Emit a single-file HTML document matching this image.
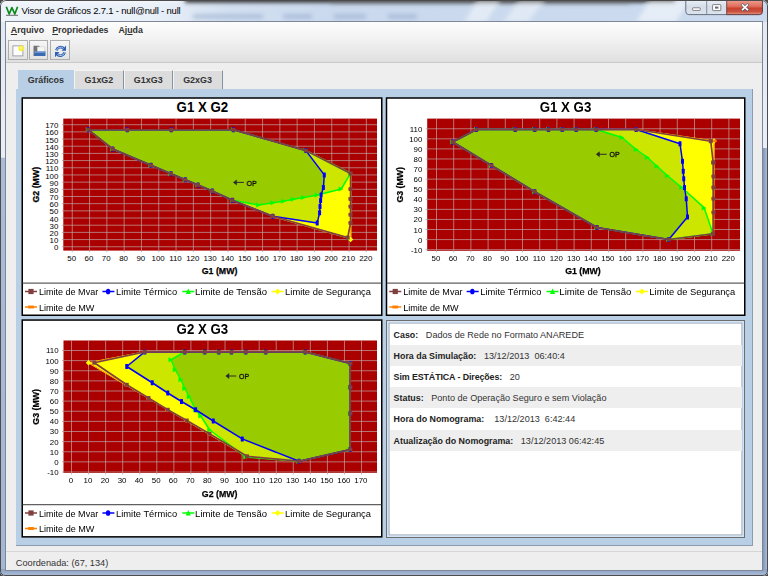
<!DOCTYPE html>
<html lang="pt-BR">
<head>
<meta charset="utf-8">
<title>Visor de Gráficos 2.7.1 - null@null - null</title>
<style>
html,body{margin:0;padding:0;}
body{width:768px;height:576px;overflow:hidden;position:relative;background:#4a4a4a;font-family:"Liberation Sans",sans-serif;font-size:9px;color:#333;}
#win{position:absolute;left:0;top:0;width:768px;height:576px;box-sizing:border-box;border-radius:6px 6px 5px 5px;background:linear-gradient(to bottom,#dfe8f4 0,#e9eff8 157px,#aabcd8 158.5px,#a3b6d3 100%);overflow:hidden;}
#win:before{content:"";position:absolute;left:0;top:0;right:0;bottom:0;border:1px solid #4c4c4c;border-radius:6px 6px 5px 5px;box-sizing:border-box;z-index:5;pointer-events:none;}
#titlebar{position:absolute;left:0;top:0;width:768px;height:22px;background:linear-gradient(to right,#eef3fa 0,#eaf0f8 150px,#d3e0f1 230px,#cad9ee 330px,#cbdaee 100%);}
#title{position:absolute;left:21.5px;top:5.2px;font-size:9.5px;color:#000;white-space:nowrap;letter-spacing:-0.2px;}
#client{position:absolute;left:5.6px;top:21.6px;width:756.6px;height:548.4px;background:#eeeeee;outline:1px solid #7d8796;overflow:hidden;}
#bars{position:absolute;left:0;top:0;width:100%;height:41px;background:linear-gradient(#fdfdfd,#f4f4f4 35%,#dfdfdf);}
#menubar{position:absolute;left:0;top:0;width:100%;height:18px;}
.menu{position:absolute;top:3.9px;font-weight:bold;font-size:8.8px;color:#333;white-space:nowrap;}
.menu u{text-decoration:underline;}
#toolbar{position:absolute;left:0;top:18px;width:100%;height:23px;border-bottom:1px solid #c9c9c9;box-sizing:border-box;}
.tbtn{position:absolute;top:0.8px;width:19.4px;height:20px;border:0.8px solid #adadad;background:linear-gradient(#f6f6f6,#e3e3e3);box-sizing:border-box;}
#tabs{position:absolute;left:0;top:0;}
.tab{position:absolute;top:48.6px;height:19.2px;box-sizing:border-box;background:#dcdcdc;border-top:1px solid #f4f4f4;border-left:1px solid #f4f4f4;border-right:1px solid #8493a3;font-weight:bold;font-size:8.95px;text-align:center;line-height:18px;color:#333;}
.tab.sel{background:#b8cfe5;border-color:#b8cfe5;height:20px;}
#tabpane{position:absolute;left:10.4px;top:67.8px;width:736.8px;height:456.4px;background:#b8cfe5;box-sizing:border-box;border-right:0.8px solid #8b9db3;border-bottom:0.8px solid #8b9db3;}
#status{position:absolute;left:0;top:529px;width:100%;height:20px;border-top:1px solid #d6d6d6;}
#status span{position:absolute;left:10.2px;top:6.2px;font-size:9.2px;color:#333;white-space:nowrap;}
#info{position:absolute;left:386px;top:320px;width:359.2px;height:218px;box-sizing:border-box;background:#fff;border:1px solid #6e6e6e;box-shadow:inset 0 0 0 1.7px #d3e3f6, inset 0 0 0 2.5px #8e9cab;}
.row{position:absolute;left:2.6px;width:352px;height:21.1px;font-size:9.1px;line-height:22px;white-space:nowrap;color:#333;overflow:hidden;}
.row b{margin-right:7.6px;color:#222;font-size:8.87px;}
.row.g{background:#eeeeee;}
svg text{font-family:"Liberation Sans",sans-serif;}
.ttl{font-size:14.1px;font-weight:bold;fill:#000;}
.tk{font-size:7.9px;fill:#000;}
.al{font-size:9.6px;font-weight:bold;fill:#000;stroke:#000;stroke-width:0.25px;}
.lg{font-size:9.3px;fill:#000;}
.op{font-size:7px;fill:#111;stroke:#111;stroke-width:0.3px;}
#charts{position:absolute;left:0;top:0;filter:blur(0.3px);}
</style>
</head>
<body>
<div id="win">
 <div id="titlebar">
  <svg width="768" height="22" style="position:absolute;left:0;top:0">
   <defs><filter id="bl"><feGaussianBlur stdDeviation="2.2"/></filter>
   <linearGradient id="cl" x1="0" y1="0" x2="0" y2="1"><stop offset="0" stop-color="#f2a99e"/><stop offset="0.5" stop-color="#dc6a57"/><stop offset="0.58" stop-color="#c9412e"/><stop offset="0.8" stop-color="#c9503c"/><stop offset="1" stop-color="#e39587"/></linearGradient>
   <linearGradient id="bt" x1="0" y1="0" x2="0" y2="1"><stop offset="0" stop-color="#eef2f8"/><stop offset="0.5" stop-color="#d5dde9"/><stop offset="1" stop-color="#dbe3ee"/></linearGradient></defs>
   <g filter="url(#bl)"><rect x="185" y="-4" width="490" height="6.5" fill="#2c2c2c"/><rect x="330" y="-2" width="300" height="6" fill="#555" opacity="0.55"/>
   <rect x="193" y="14" width="70" height="5" fill="#8fa6c8" opacity="0.5"/><rect x="283" y="14" width="29" height="5" fill="#8fa6c8" opacity="0.5"/><rect x="334" y="14" width="32" height="5" fill="#8fa6c8" opacity="0.5"/><rect x="388" y="14" width="29" height="5" fill="#8fa6c8" opacity="0.5"/>
   <polygon points="478,0 500,0 486,22 464,22" fill="#fff" opacity="0.45"/><polygon points="520,0 545,0 528,22 503,22" fill="#fff" opacity="0.4"/><polygon points="650,0 690,0 676,22 636,22" fill="#fff" opacity="0.5"/>
   <rect x="0" y="-3" width="180" height="5" fill="#fff" opacity="0.6"/></g>
   <!-- app icon -->
   <path d="M6.3 6.8 L9.2 14 L11.9 7.6 L14.8 14 L17.6 6.8" fill="none" stroke="#0a8a1a" stroke-width="1.7" stroke-linejoin="round"/>
   <line x1="6" y1="15.3" x2="18" y2="15.3" stroke="#444" stroke-width="0.8"/>
   <!-- caption buttons -->
   <path d="M685.8 -1 H762.4 V11.5 Q762.4 14.6 759.4 14.6 H688.8 Q685.8 14.6 685.8 11.5 Z" fill="url(#bt)" stroke="#5c6470" stroke-width="0.9"/>
   <path d="M726.7 -1 H762.4 V11.5 Q762.4 14.6 759.4 14.6 H726.7 Z" fill="url(#cl)" stroke="#5c3030" stroke-width="0.8"/>
   <line x1="706.7" y1="0" x2="706.7" y2="14.6" stroke="#6d7683" stroke-width="0.8"/>
   <rect x="692.6" y="7.8" width="7.6" height="2.6" rx="0.6" fill="#fff" stroke="#555" stroke-width="0.7"/>
   <rect x="712.6" y="4.6" width="8.2" height="6" rx="0.6" fill="#fff" stroke="#555" stroke-width="0.7"/>
   <rect x="715" y="6.6" width="3.4" height="2" fill="#667" />
   <path d="M742.6 5 L747.4 9.6 M747.4 5 L742.6 9.6" stroke="#555a66" stroke-width="2.9" stroke-linecap="square"/>
   <path d="M742.6 5 L747.4 9.6 M747.4 5 L742.6 9.6" stroke="#fff" stroke-width="1.7" stroke-linecap="square"/>
  </svg>
  <div id="title">Visor de Gráficos 2.7.1 - null@null - null</div>
 </div>
 <div style="position:absolute;left:762px;top:148px;width:6px;height:428px;background:linear-gradient(to right,#738bb2,#a9bad6 80%)"></div>
 <div style="position:absolute;left:0;top:569px;width:768px;height:7px;background:linear-gradient(#8aa0c3,#adbdd8)"></div>
 <div id="client">
  <div id="bars"></div>
  <div id="menubar">
   <span class="menu" style="left:5.2px"><u>A</u>rquivo</span>
   <span class="menu" style="left:46.6px"><u>P</u>ropriedades</span>
   <span class="menu" style="left:112.8px">Aj<u>u</u>da</span>
  </div>
  <div id="toolbar">
   <div class="tbtn" style="left:2.2px;width:19.8px"></div>
   <div class="tbtn" style="left:23.4px;width:19.4px"></div>
   <div class="tbtn" style="left:44.4px;width:19.6px"></div>
   <svg width="80" height="23" style="position:absolute;left:0;top:0">
    <rect x="6.9" y="5.9" width="10" height="10" fill="#fdfdfd" stroke="#9a9a9a" stroke-width="0.9"/>
    <circle cx="15.3" cy="8.3" r="2.9" fill="#f5ee3c"/><circle cx="15.1" cy="8.1" r="1.1" fill="#fbf8a0"/>
    <path d="M27.5 5.8 H33 L34 7 H38.9 V15.9 H27.5 Z" fill="#747474"/>
    <rect x="31.3" y="6.9" width="7.6" height="5.2" fill="#f6f6f6" stroke="#c4c4c4" stroke-width="0.4"/>
    <path d="M28.3 11.5 H39.5 V16 H28.3 Z" fill="#3b6ab2"/><path d="M28.3 11.5 H39.5 V12.7 H28.3 Z" fill="#7da2d8"/>
    <g fill="none" stroke="#2c5fb2" stroke-width="2.7"><path d="M50.4 10.4 A4.3 4.3 0 0 1 57.6 8.3"/><path d="M58.6 12.4 A4.3 4.3 0 0 1 51.4 14.5"/></g>
    <g fill="none" stroke="#bcd3f0" stroke-width="0.9"><path d="M50.4 10.2 A4.3 4.3 0 0 1 57.4 8.3"/><path d="M58.6 12.6 A4.3 4.3 0 0 1 51.6 14.5"/></g>
    <path d="M55.6 10.8 L60 10.8 L60 5.6 Z M53.4 12 L49 12 L49 17.2 Z" fill="#2c5fb2"/>
   </svg>
  </div>
  <div id="tabpane"></div>
  <div class="tab sel" style="left:12.4px;width:55.8px">Gráficos</div>
  <div class="tab" style="left:68.2px;width:50.2px">G1xG2</div>
  <div class="tab" style="left:118.4px;width:48.6px">G1xG3</div>
  <div class="tab" style="left:167px;width:50px">G2xG3</div>
  <div id="status"><span>Coordenada: (67, 134)</span></div>
 </div>
 <svg id="charts" width="768" height="576" viewBox="0 0 768 576">
<g id="c1">
<rect x="21.50" y="97.25" width="361.00" height="218.75" fill="#000"/>
<rect x="23.00" y="98.75" width="358.00" height="215.75" fill="#fff"/>
<text x="176.60" y="111.65" class="ttl" textLength="51.6" lengthAdjust="spacingAndGlyphs">G1 X G2</text>
<rect x="63.30" y="118.60" width="313.70" height="132.00" fill="#aa0000"/>
<g stroke="#bfa6a6" stroke-width="0.7"><line x1="72.25" y1="118.60" x2="72.25" y2="250.60"/><line x1="89.55" y1="118.60" x2="89.55" y2="250.60"/><line x1="106.85" y1="118.60" x2="106.85" y2="250.60"/><line x1="124.15" y1="118.60" x2="124.15" y2="250.60"/><line x1="141.45" y1="118.60" x2="141.45" y2="250.60"/><line x1="158.75" y1="118.60" x2="158.75" y2="250.60"/><line x1="176.05" y1="118.60" x2="176.05" y2="250.60"/><line x1="193.35" y1="118.60" x2="193.35" y2="250.60"/><line x1="210.65" y1="118.60" x2="210.65" y2="250.60"/><line x1="227.95" y1="118.60" x2="227.95" y2="250.60"/><line x1="245.25" y1="118.60" x2="245.25" y2="250.60"/><line x1="262.55" y1="118.60" x2="262.55" y2="250.60"/><line x1="279.85" y1="118.60" x2="279.85" y2="250.60"/><line x1="297.15" y1="118.60" x2="297.15" y2="250.60"/><line x1="314.45" y1="118.60" x2="314.45" y2="250.60"/><line x1="331.75" y1="118.60" x2="331.75" y2="250.60"/><line x1="349.05" y1="118.60" x2="349.05" y2="250.60"/><line x1="366.35" y1="118.60" x2="366.35" y2="250.60"/><line x1="63.30" y1="246.75" x2="377.00" y2="246.75"/><line x1="63.30" y1="239.57" x2="377.00" y2="239.57"/><line x1="63.30" y1="232.39" x2="377.00" y2="232.39"/><line x1="63.30" y1="225.21" x2="377.00" y2="225.21"/><line x1="63.30" y1="218.03" x2="377.00" y2="218.03"/><line x1="63.30" y1="210.85" x2="377.00" y2="210.85"/><line x1="63.30" y1="203.67" x2="377.00" y2="203.67"/><line x1="63.30" y1="196.49" x2="377.00" y2="196.49"/><line x1="63.30" y1="189.31" x2="377.00" y2="189.31"/><line x1="63.30" y1="182.13" x2="377.00" y2="182.13"/><line x1="63.30" y1="174.95" x2="377.00" y2="174.95"/><line x1="63.30" y1="167.77" x2="377.00" y2="167.77"/><line x1="63.30" y1="160.59" x2="377.00" y2="160.59"/><line x1="63.30" y1="153.41" x2="377.00" y2="153.41"/><line x1="63.30" y1="146.23" x2="377.00" y2="146.23"/><line x1="63.30" y1="139.05" x2="377.00" y2="139.05"/><line x1="63.30" y1="131.87" x2="377.00" y2="131.87"/><line x1="63.30" y1="124.69" x2="377.00" y2="124.69"/></g>
<clipPath id="c1_h"><polygon points="88.30,129.75 233.40,129.75 305.90,150.60 350.80,173.40 350.80,239.80 347.70,237.80 272.75,216.40 232.40,200.25 212.30,191.00 198.00,185.00 185.30,179.70 171.00,173.70 151.00,165.30 112.70,149.00"/></clipPath>
<clipPath id="c1_a"><polygon points="88.30,129.75 233.40,129.75 305.90,150.60 324.30,174.90 323.40,187.50 321.10,195.00 320.60,200.60 320.00,206.60 319.60,212.80 317.20,223.10 272.75,216.20 232.40,200.25 212.30,191.00 198.00,185.00 185.30,179.70 171.00,173.70 151.00,165.30 112.70,149.00"/></clipPath>
<polygon points="88.30,129.75 233.40,129.75 305.90,150.60 350.80,173.40 350.80,239.80 347.70,237.80 272.75,216.40 232.40,200.25 212.30,191.00 198.00,185.00 185.30,179.70 171.00,173.70 151.00,165.30 112.70,149.00" fill="#ffff00"/>
<g clip-path="url(#c1_h)">
<polygon points="88.30,129.75 233.40,129.75 305.90,150.60 324.30,174.90 323.40,187.50 321.10,195.00 320.60,200.60 320.00,206.60 319.60,212.80 317.20,223.10 272.75,216.20 232.40,200.25 212.30,191.00 198.00,185.00 185.30,179.70 171.00,173.70 151.00,165.30 112.70,149.00" fill="#cce600"/>
<polygon points="88.30,129.75 233.40,129.75 305.90,150.60 350.60,173.40 341.20,189.00 317.20,195.00 303.70,197.40 293.40,199.30 283.60,201.20 273.10,202.70 258.70,204.90 232.40,200.25 212.30,191.00 198.00,185.00 185.30,179.70 171.00,173.70 151.00,165.30 112.70,149.00" fill="#cce600"/>
<polygon points="88.30,129.75 233.40,129.75 305.90,150.60 350.60,173.40 341.20,189.00 317.20,195.00 303.70,197.40 293.40,199.30 283.60,201.20 273.10,202.70 258.70,204.90 232.40,200.25 212.30,191.00 198.00,185.00 185.30,179.70 171.00,173.70 151.00,165.30 112.70,149.00" fill="#99cc00" clip-path="url(#c1_a)"/>
</g>
<polygon points="88.30,129.75 233.40,129.75 305.90,150.60 350.80,173.40 350.80,239.80 347.70,237.80 272.75,216.40 232.40,200.25 212.30,191.00 198.00,185.00 185.30,179.70 171.00,173.70 151.00,165.30 112.70,149.00" fill="none" stroke="#ffff00" stroke-width="1.2" stroke-linejoin="round"/>
<polygon points="88.30,129.75 233.40,129.75 305.90,150.60 350.80,173.40 350.80,239.80 347.70,237.80 272.75,216.40 232.40,200.25 212.30,191.00 198.00,185.00 185.30,179.70 171.00,173.70 151.00,165.30 112.70,149.00" fill="none" stroke="#ff8000" stroke-width="0.8" stroke-linejoin="round"/>
<polygon points="350.10,186.90 352.00,188.80 350.10,190.70 348.20,188.80" fill="#ffff00"/>
<rect x="348.10" y="187.80" width="4.00" height="2.00" fill="#ff8000"/>
<polygon points="350.10,196.80 352.00,198.70 350.10,200.60 348.20,198.70" fill="#ffff00"/>
<rect x="348.10" y="197.70" width="4.00" height="2.00" fill="#ff8000"/>
<polygon points="350.10,204.40 352.00,206.30 350.10,208.20 348.20,206.30" fill="#ffff00"/>
<rect x="348.10" y="205.30" width="4.00" height="2.00" fill="#ff8000"/>
<polygon points="350.10,212.55 352.00,214.45 350.10,216.35 348.20,214.45" fill="#ffff00"/>
<rect x="348.10" y="213.45" width="4.00" height="2.00" fill="#ff8000"/>
<polygon points="350.10,220.90 352.00,222.80 350.10,224.70 348.20,222.80" fill="#ffff00"/>
<rect x="348.10" y="221.80" width="4.00" height="2.00" fill="#ff8000"/>
<polygon points="350.60,236.81 353.29,239.50 350.60,242.19 347.91,239.50" fill="#ffff00"/>
<polygon points="88.30,129.75 233.40,129.75 305.90,150.60 350.60,173.40 341.20,189.00 317.20,195.00 303.70,197.40 293.40,199.30 283.60,201.20 273.10,202.70 258.70,204.90 232.40,200.25 212.30,191.00 198.00,185.00 185.30,179.70 171.00,173.70 151.00,165.30 112.70,149.00" fill="none" stroke="#00ff00" stroke-width="1.5" stroke-linejoin="round"/>
<polygon points="85.80,127.25 90.55,129.75 85.80,132.25" fill="#00ff00"/>
<polygon points="230.90,127.25 235.65,129.75 230.90,132.25" fill="#00ff00"/>
<polygon points="303.40,148.10 308.15,150.60 303.40,153.10" fill="#00ff00"/>
<polygon points="348.10,170.90 352.85,173.40 348.10,175.90" fill="#00ff00"/>
<polygon points="338.70,186.50 343.45,189.00 338.70,191.50" fill="#00ff00"/>
<polygon points="314.70,192.50 319.45,195.00 314.70,197.50" fill="#00ff00"/>
<polygon points="301.20,194.90 305.95,197.40 301.20,199.90" fill="#00ff00"/>
<polygon points="290.90,196.80 295.65,199.30 290.90,201.80" fill="#00ff00"/>
<polygon points="281.10,198.70 285.85,201.20 281.10,203.70" fill="#00ff00"/>
<polygon points="270.60,200.20 275.35,202.70 270.60,205.20" fill="#00ff00"/>
<polygon points="256.20,202.40 260.95,204.90 256.20,207.40" fill="#00ff00"/>
<polygon points="229.90,197.75 234.65,200.25 229.90,202.75" fill="#00ff00"/>
<polygon points="209.80,188.50 214.55,191.00 209.80,193.50" fill="#00ff00"/>
<polygon points="195.50,182.50 200.25,185.00 195.50,187.50" fill="#00ff00"/>
<polygon points="182.80,177.20 187.55,179.70 182.80,182.20" fill="#00ff00"/>
<polygon points="168.50,171.20 173.25,173.70 168.50,176.20" fill="#00ff00"/>
<polygon points="148.50,162.80 153.25,165.30 148.50,167.80" fill="#00ff00"/>
<polygon points="110.20,146.50 114.95,149.00 110.20,151.50" fill="#00ff00"/>
<polygon points="88.30,129.75 127.30,129.75 171.30,129.75 233.40,129.75 305.90,150.60 324.30,174.90 323.40,187.50 321.10,195.00 320.60,200.60 320.00,206.60 319.60,212.80 317.20,223.10 272.75,216.20 232.40,200.25 212.30,191.00 198.00,185.00 185.30,179.70 171.00,173.70 151.00,165.30 112.70,149.00" fill="none" stroke="#0000ff" stroke-width="1.5" stroke-linejoin="round"/>
<rect x="86.80" y="127.25" width="3.00" height="5.00" rx="0.5" fill="#0000ff"/>
<rect x="125.80" y="127.25" width="3.00" height="5.00" rx="0.5" fill="#0000ff"/>
<rect x="169.80" y="127.25" width="3.00" height="5.00" rx="0.5" fill="#0000ff"/>
<rect x="231.90" y="127.25" width="3.00" height="5.00" rx="0.5" fill="#0000ff"/>
<rect x="304.40" y="148.10" width="3.00" height="5.00" rx="0.5" fill="#0000ff"/>
<rect x="322.80" y="172.40" width="3.00" height="5.00" rx="0.5" fill="#0000ff"/>
<rect x="321.90" y="185.00" width="3.00" height="5.00" rx="0.5" fill="#0000ff"/>
<rect x="319.60" y="192.50" width="3.00" height="5.00" rx="0.5" fill="#0000ff"/>
<rect x="319.10" y="198.10" width="3.00" height="5.00" rx="0.5" fill="#0000ff"/>
<rect x="318.50" y="204.10" width="3.00" height="5.00" rx="0.5" fill="#0000ff"/>
<rect x="318.10" y="210.30" width="3.00" height="5.00" rx="0.5" fill="#0000ff"/>
<rect x="315.70" y="220.60" width="3.00" height="5.00" rx="0.5" fill="#0000ff"/>
<rect x="271.25" y="213.70" width="3.00" height="5.00" rx="0.5" fill="#0000ff"/>
<rect x="230.90" y="197.75" width="3.00" height="5.00" rx="0.5" fill="#0000ff"/>
<rect x="210.80" y="188.50" width="3.00" height="5.00" rx="0.5" fill="#0000ff"/>
<rect x="196.50" y="182.50" width="3.00" height="5.00" rx="0.5" fill="#0000ff"/>
<rect x="183.80" y="177.20" width="3.00" height="5.00" rx="0.5" fill="#0000ff"/>
<rect x="169.50" y="171.20" width="3.00" height="5.00" rx="0.5" fill="#0000ff"/>
<rect x="149.50" y="162.80" width="3.00" height="5.00" rx="0.5" fill="#0000ff"/>
<rect x="111.20" y="146.50" width="3.00" height="5.00" rx="0.5" fill="#0000ff"/>
<polygon points="88.30,129.75 127.30,129.75 171.30,129.75 233.40,129.75 305.90,150.60 350.60,173.40 350.60,223.00 347.70,237.60 272.75,216.20 232.40,200.25 212.30,191.00 198.00,185.00 185.30,179.70 171.00,173.70 151.00,165.30 112.70,149.00" fill="none" stroke="#804040" stroke-width="1.7" stroke-linejoin="round"/>
<rect x="86.35" y="127.80" width="3.90" height="3.90" fill="#804040"/>
<rect x="125.35" y="127.80" width="3.90" height="3.90" fill="#804040"/>
<rect x="169.35" y="127.80" width="3.90" height="3.90" fill="#804040"/>
<rect x="231.45" y="127.80" width="3.90" height="3.90" fill="#804040"/>
<rect x="303.95" y="148.65" width="3.90" height="3.90" fill="#804040"/>
<rect x="348.65" y="171.45" width="3.90" height="3.90" fill="#804040"/>
<rect x="348.65" y="221.05" width="3.90" height="3.90" fill="#804040"/>
<rect x="345.75" y="235.65" width="3.90" height="3.90" fill="#804040"/>
<rect x="270.80" y="214.25" width="3.90" height="3.90" fill="#804040"/>
<rect x="230.45" y="198.30" width="3.90" height="3.90" fill="#804040"/>
<rect x="210.35" y="189.05" width="3.90" height="3.90" fill="#804040"/>
<rect x="196.05" y="183.05" width="3.90" height="3.90" fill="#804040"/>
<rect x="183.35" y="177.75" width="3.90" height="3.90" fill="#804040"/>
<rect x="169.05" y="171.75" width="3.90" height="3.90" fill="#804040"/>
<rect x="149.05" y="163.35" width="3.90" height="3.90" fill="#804040"/>
<rect x="110.75" y="147.05" width="3.90" height="3.90" fill="#804040"/>
<rect x="348.65" y="187.15" width="3.90" height="3.90" fill="#804040"/>
<rect x="348.65" y="197.05" width="3.90" height="3.90" fill="#804040"/>
<rect x="348.65" y="204.65" width="3.90" height="3.90" fill="#804040"/>
<rect x="348.65" y="212.80" width="3.90" height="3.90" fill="#804040"/>
<g stroke="#2a2a2a" stroke-width="1" fill="#2a2a2a"><line x1="234.40" y1="182.40" x2="243.90" y2="182.40"/><polygon points="236.60,179.90 233.40,182.40 236.60,184.90" stroke-width="0.5"/></g>
<text x="246.60" y="185.50" class="op">OP</text>
<line x1="72.25" y1="250.60" x2="72.25" y2="252.10" stroke="#999" stroke-width="0.7"/>
<text x="71.65" y="260.90" class="tk" text-anchor="middle">50</text>
<line x1="89.55" y1="250.60" x2="89.55" y2="252.10" stroke="#999" stroke-width="0.7"/>
<text x="88.95" y="260.90" class="tk" text-anchor="middle">60</text>
<line x1="106.85" y1="250.60" x2="106.85" y2="252.10" stroke="#999" stroke-width="0.7"/>
<text x="106.25" y="260.90" class="tk" text-anchor="middle">70</text>
<line x1="124.15" y1="250.60" x2="124.15" y2="252.10" stroke="#999" stroke-width="0.7"/>
<text x="123.55" y="260.90" class="tk" text-anchor="middle">80</text>
<line x1="141.45" y1="250.60" x2="141.45" y2="252.10" stroke="#999" stroke-width="0.7"/>
<text x="140.85" y="260.90" class="tk" text-anchor="middle">90</text>
<line x1="158.75" y1="250.60" x2="158.75" y2="252.10" stroke="#999" stroke-width="0.7"/>
<text x="158.15" y="260.90" class="tk" text-anchor="middle">100</text>
<line x1="176.05" y1="250.60" x2="176.05" y2="252.10" stroke="#999" stroke-width="0.7"/>
<text x="175.45" y="260.90" class="tk" text-anchor="middle">110</text>
<line x1="193.35" y1="250.60" x2="193.35" y2="252.10" stroke="#999" stroke-width="0.7"/>
<text x="192.75" y="260.90" class="tk" text-anchor="middle">120</text>
<line x1="210.65" y1="250.60" x2="210.65" y2="252.10" stroke="#999" stroke-width="0.7"/>
<text x="210.05" y="260.90" class="tk" text-anchor="middle">130</text>
<line x1="227.95" y1="250.60" x2="227.95" y2="252.10" stroke="#999" stroke-width="0.7"/>
<text x="227.35" y="260.90" class="tk" text-anchor="middle">140</text>
<line x1="245.25" y1="250.60" x2="245.25" y2="252.10" stroke="#999" stroke-width="0.7"/>
<text x="244.65" y="260.90" class="tk" text-anchor="middle">150</text>
<line x1="262.55" y1="250.60" x2="262.55" y2="252.10" stroke="#999" stroke-width="0.7"/>
<text x="261.95" y="260.90" class="tk" text-anchor="middle">160</text>
<line x1="279.85" y1="250.60" x2="279.85" y2="252.10" stroke="#999" stroke-width="0.7"/>
<text x="279.25" y="260.90" class="tk" text-anchor="middle">170</text>
<line x1="297.15" y1="250.60" x2="297.15" y2="252.10" stroke="#999" stroke-width="0.7"/>
<text x="296.55" y="260.90" class="tk" text-anchor="middle">180</text>
<line x1="314.45" y1="250.60" x2="314.45" y2="252.10" stroke="#999" stroke-width="0.7"/>
<text x="313.85" y="260.90" class="tk" text-anchor="middle">190</text>
<line x1="331.75" y1="250.60" x2="331.75" y2="252.10" stroke="#999" stroke-width="0.7"/>
<text x="331.15" y="260.90" class="tk" text-anchor="middle">200</text>
<line x1="349.05" y1="250.60" x2="349.05" y2="252.10" stroke="#999" stroke-width="0.7"/>
<text x="348.45" y="260.90" class="tk" text-anchor="middle">210</text>
<line x1="366.35" y1="250.60" x2="366.35" y2="252.10" stroke="#999" stroke-width="0.7"/>
<text x="365.75" y="260.90" class="tk" text-anchor="middle">220</text>
<line x1="61.80" y1="246.75" x2="63.30" y2="246.75" stroke="#999" stroke-width="0.7"/>
<text x="58.40" y="250.35" class="tk" text-anchor="end">0</text>
<line x1="61.80" y1="239.57" x2="63.30" y2="239.57" stroke="#999" stroke-width="0.7"/>
<text x="58.40" y="243.17" class="tk" text-anchor="end">10</text>
<line x1="61.80" y1="232.39" x2="63.30" y2="232.39" stroke="#999" stroke-width="0.7"/>
<text x="58.40" y="235.99" class="tk" text-anchor="end">20</text>
<line x1="61.80" y1="225.21" x2="63.30" y2="225.21" stroke="#999" stroke-width="0.7"/>
<text x="58.40" y="228.81" class="tk" text-anchor="end">30</text>
<line x1="61.80" y1="218.03" x2="63.30" y2="218.03" stroke="#999" stroke-width="0.7"/>
<text x="58.40" y="221.63" class="tk" text-anchor="end">40</text>
<line x1="61.80" y1="210.85" x2="63.30" y2="210.85" stroke="#999" stroke-width="0.7"/>
<text x="58.40" y="214.45" class="tk" text-anchor="end">50</text>
<line x1="61.80" y1="203.67" x2="63.30" y2="203.67" stroke="#999" stroke-width="0.7"/>
<text x="58.40" y="207.27" class="tk" text-anchor="end">60</text>
<line x1="61.80" y1="196.49" x2="63.30" y2="196.49" stroke="#999" stroke-width="0.7"/>
<text x="58.40" y="200.09" class="tk" text-anchor="end">70</text>
<line x1="61.80" y1="189.31" x2="63.30" y2="189.31" stroke="#999" stroke-width="0.7"/>
<text x="58.40" y="192.91" class="tk" text-anchor="end">80</text>
<line x1="61.80" y1="182.13" x2="63.30" y2="182.13" stroke="#999" stroke-width="0.7"/>
<text x="58.40" y="185.73" class="tk" text-anchor="end">90</text>
<line x1="61.80" y1="174.95" x2="63.30" y2="174.95" stroke="#999" stroke-width="0.7"/>
<text x="58.40" y="178.55" class="tk" text-anchor="end">100</text>
<line x1="61.80" y1="167.77" x2="63.30" y2="167.77" stroke="#999" stroke-width="0.7"/>
<text x="58.40" y="171.37" class="tk" text-anchor="end">110</text>
<line x1="61.80" y1="160.59" x2="63.30" y2="160.59" stroke="#999" stroke-width="0.7"/>
<text x="58.40" y="164.19" class="tk" text-anchor="end">120</text>
<line x1="61.80" y1="153.41" x2="63.30" y2="153.41" stroke="#999" stroke-width="0.7"/>
<text x="58.40" y="157.01" class="tk" text-anchor="end">130</text>
<line x1="61.80" y1="146.23" x2="63.30" y2="146.23" stroke="#999" stroke-width="0.7"/>
<text x="58.40" y="149.83" class="tk" text-anchor="end">140</text>
<line x1="61.80" y1="139.05" x2="63.30" y2="139.05" stroke="#999" stroke-width="0.7"/>
<text x="58.40" y="142.65" class="tk" text-anchor="end">150</text>
<line x1="61.80" y1="131.87" x2="63.30" y2="131.87" stroke="#999" stroke-width="0.7"/>
<text x="58.40" y="135.47" class="tk" text-anchor="end">160</text>
<line x1="61.80" y1="124.69" x2="63.30" y2="124.69" stroke="#999" stroke-width="0.7"/>
<text x="58.40" y="128.29" class="tk" text-anchor="end">170</text>
<text x="201.75" y="274.20" class="al" textLength="35.6" lengthAdjust="spacingAndGlyphs">G1 (MW)</text>
<text transform="translate(38.70,202.50) rotate(-90)" class="al" textLength="35.6" lengthAdjust="spacingAndGlyphs">G2 (MW)</text>
<line x1="22.70" y1="283.10" x2="381.30" y2="283.10" stroke="#606060" stroke-width="1.1"/>
<line x1="25.00" y1="291.50" x2="37.00" y2="291.50" stroke="#804040" stroke-width="1.5"/>
<rect x="28.40" y="288.90" width="5.20" height="5.20" fill="#804040"/>
<text x="38.90" y="295.20" class="lg" textLength="59.3" lengthAdjust="spacingAndGlyphs">Limite de Mvar</text>
<line x1="102.40" y1="291.50" x2="114.40" y2="291.50" stroke="#0000ff" stroke-width="1.5"/>
<ellipse cx="108.10" cy="291.50" rx="2.21" ry="2.86" fill="#0000ff"/>
<text x="116.10" y="295.20" class="lg" textLength="61.0" lengthAdjust="spacingAndGlyphs">Limite Térmico</text>
<line x1="182.30" y1="291.50" x2="194.30" y2="291.50" stroke="#00ff00" stroke-width="1.5"/>
<polygon points="188.30,288.60 190.90,294.10 185.70,294.10" fill="#00ff00"/>
<text x="195.10" y="295.20" class="lg" textLength="71.9" lengthAdjust="spacingAndGlyphs">Limite de Tensão</text>
<line x1="271.60" y1="291.50" x2="283.60" y2="291.50" stroke="#ffff00" stroke-width="1.5"/>
<polygon points="277.60,288.59 280.51,291.50 277.60,294.41 274.69,291.50" fill="#ffff00"/>
<text x="285.10" y="295.20" class="lg" textLength="85.9" lengthAdjust="spacingAndGlyphs">Limite de Segurança</text>
<line x1="25.00" y1="307.00" x2="37.00" y2="307.00" stroke="#ff8000" stroke-width="1.5"/>
<rect x="28.10" y="305.55" width="5.80" height="2.90" fill="#ff8000"/>
<text x="38.90" y="310.60" class="lg" textLength="55.5" lengthAdjust="spacingAndGlyphs">Limite de MW</text>
</g>
<g id="c2">
<rect x="385.75" y="97.25" width="359.75" height="218.75" fill="#000"/>
<rect x="387.25" y="98.75" width="356.75" height="215.75" fill="#fff"/>
<text x="539.73" y="111.65" class="ttl" textLength="51.6" lengthAdjust="spacingAndGlyphs">G1 X G3</text>
<rect x="427.20" y="118.60" width="312.80" height="132.20" fill="#aa0000"/>
<g stroke="#bfa6a6" stroke-width="0.7"><line x1="436.50" y1="118.60" x2="436.50" y2="250.80"/><line x1="453.70" y1="118.60" x2="453.70" y2="250.80"/><line x1="470.90" y1="118.60" x2="470.90" y2="250.80"/><line x1="488.10" y1="118.60" x2="488.10" y2="250.80"/><line x1="505.30" y1="118.60" x2="505.30" y2="250.80"/><line x1="522.50" y1="118.60" x2="522.50" y2="250.80"/><line x1="539.70" y1="118.60" x2="539.70" y2="250.80"/><line x1="556.90" y1="118.60" x2="556.90" y2="250.80"/><line x1="574.10" y1="118.60" x2="574.10" y2="250.80"/><line x1="591.30" y1="118.60" x2="591.30" y2="250.80"/><line x1="608.50" y1="118.60" x2="608.50" y2="250.80"/><line x1="625.70" y1="118.60" x2="625.70" y2="250.80"/><line x1="642.90" y1="118.60" x2="642.90" y2="250.80"/><line x1="660.10" y1="118.60" x2="660.10" y2="250.80"/><line x1="677.30" y1="118.60" x2="677.30" y2="250.80"/><line x1="694.50" y1="118.60" x2="694.50" y2="250.80"/><line x1="711.70" y1="118.60" x2="711.70" y2="250.80"/><line x1="728.90" y1="118.60" x2="728.90" y2="250.80"/><line x1="427.20" y1="249.65" x2="740.00" y2="249.65"/><line x1="427.20" y1="239.58" x2="740.00" y2="239.58"/><line x1="427.20" y1="229.50" x2="740.00" y2="229.50"/><line x1="427.20" y1="219.43" x2="740.00" y2="219.43"/><line x1="427.20" y1="209.35" x2="740.00" y2="209.35"/><line x1="427.20" y1="199.28" x2="740.00" y2="199.28"/><line x1="427.20" y1="189.20" x2="740.00" y2="189.20"/><line x1="427.20" y1="179.12" x2="740.00" y2="179.12"/><line x1="427.20" y1="169.05" x2="740.00" y2="169.05"/><line x1="427.20" y1="158.98" x2="740.00" y2="158.98"/><line x1="427.20" y1="148.90" x2="740.00" y2="148.90"/><line x1="427.20" y1="138.83" x2="740.00" y2="138.83"/><line x1="427.20" y1="128.75" x2="740.00" y2="128.75"/></g>
<clipPath id="c2_h"><polygon points="452.75,142.00 476.50,129.50 515.25,129.50 534.75,129.50 548.50,129.50 562.25,129.50 576.25,129.50 596.25,129.50 636.25,129.50 714.00,141.00 713.60,233.75 668.75,239.70 597.00,227.50 534.75,191.75 491.50,165.50"/></clipPath>
<clipPath id="c2_a"><polygon points="452.75,142.00 476.50,129.50 515.25,129.50 534.75,129.50 548.50,129.50 562.25,129.50 576.25,129.50 596.25,129.50 636.25,129.50 680.00,143.75 682.50,161.25 683.25,171.25 683.75,178.75 684.50,187.50 686.25,198.75 687.50,217.00 668.75,239.50 597.00,227.50 534.75,191.75 491.50,165.50"/></clipPath>
<polygon points="452.75,142.00 476.50,129.50 515.25,129.50 534.75,129.50 548.50,129.50 562.25,129.50 576.25,129.50 596.25,129.50 636.25,129.50 714.00,141.00 713.60,233.75 668.75,239.70 597.00,227.50 534.75,191.75 491.50,165.50" fill="#ffff00"/>
<g clip-path="url(#c2_h)">
<polygon points="452.75,142.00 476.50,129.50 515.25,129.50 534.75,129.50 548.50,129.50 562.25,129.50 576.25,129.50 596.25,129.50 636.25,129.50 680.00,143.75 682.50,161.25 683.25,171.25 683.75,178.75 684.50,187.50 686.25,198.75 687.50,217.00 668.75,239.50 597.00,227.50 534.75,191.75 491.50,165.50" fill="#cce600"/>
<polygon points="452.75,142.00 476.50,129.50 515.25,129.50 534.75,129.50 548.50,129.50 562.25,129.50 576.25,129.50 596.25,129.50 622.00,137.50 636.25,149.50 647.50,157.50 657.00,166.25 667.50,175.75 681.75,187.50 704.25,207.90 713.00,233.75 668.75,239.50 597.00,227.50 534.75,191.75 491.50,165.50" fill="#cce600"/>
<polygon points="452.75,142.00 476.50,129.50 515.25,129.50 534.75,129.50 548.50,129.50 562.25,129.50 576.25,129.50 596.25,129.50 622.00,137.50 636.25,149.50 647.50,157.50 657.00,166.25 667.50,175.75 681.75,187.50 704.25,207.90 713.00,233.75 668.75,239.50 597.00,227.50 534.75,191.75 491.50,165.50" fill="#99cc00" clip-path="url(#c2_a)"/>
</g>
<polygon points="452.75,142.00 476.50,129.50 515.25,129.50 534.75,129.50 548.50,129.50 562.25,129.50 576.25,129.50 596.25,129.50 636.25,129.50 714.00,141.00 713.60,233.75 668.75,239.70 597.00,227.50 534.75,191.75 491.50,165.50" fill="none" stroke="#ffff00" stroke-width="1.2" stroke-linejoin="round"/>
<polygon points="452.75,142.00 476.50,129.50 515.25,129.50 534.75,129.50 548.50,129.50 562.25,129.50 576.25,129.50 596.25,129.50 636.25,129.50 714.00,141.00 713.60,233.75 668.75,239.70 597.00,227.50 534.75,191.75 491.50,165.50" fill="none" stroke="#ff8000" stroke-width="0.8" stroke-linejoin="round"/>
<polygon points="713.10,160.30 715.00,162.20 713.10,164.10 711.20,162.20" fill="#ffff00"/>
<rect x="711.10" y="161.20" width="4.00" height="2.00" fill="#ff8000"/>
<polygon points="713.10,174.30 715.00,176.20 713.10,178.10 711.20,176.20" fill="#ffff00"/>
<rect x="711.10" y="175.20" width="4.00" height="2.00" fill="#ff8000"/>
<polygon points="713.10,185.30 715.00,187.20 713.10,189.10 711.20,187.20" fill="#ffff00"/>
<rect x="711.10" y="186.20" width="4.00" height="2.00" fill="#ff8000"/>
<polygon points="713.10,196.55 715.00,198.45 713.10,200.35 711.20,198.45" fill="#ffff00"/>
<rect x="711.10" y="197.45" width="4.00" height="2.00" fill="#ff8000"/>
<polygon points="713.10,210.30 715.00,212.20 713.10,214.10 711.20,212.20" fill="#ffff00"/>
<rect x="711.10" y="211.20" width="4.00" height="2.00" fill="#ff8000"/>
<polygon points="714.00,138.31 716.69,141.00 714.00,143.69 711.31,141.00" fill="#ffff00"/>
<rect x="711.60" y="139.80" width="4.80" height="2.40" fill="#ff8000"/>
<polygon points="452.75,142.00 476.50,129.50 515.25,129.50 534.75,129.50 548.50,129.50 562.25,129.50 576.25,129.50 596.25,129.50 622.00,137.50 636.25,149.50 647.50,157.50 657.00,166.25 667.50,175.75 681.75,187.50 704.25,207.90 713.00,233.75 668.75,239.50 597.00,227.50 534.75,191.75 491.50,165.50" fill="none" stroke="#00ff00" stroke-width="1.5" stroke-linejoin="round"/>
<polygon points="450.25,139.50 455.00,142.00 450.25,144.50" fill="#00ff00"/>
<polygon points="474.00,127.00 478.75,129.50 474.00,132.00" fill="#00ff00"/>
<polygon points="512.75,127.00 517.50,129.50 512.75,132.00" fill="#00ff00"/>
<polygon points="532.25,127.00 537.00,129.50 532.25,132.00" fill="#00ff00"/>
<polygon points="546.00,127.00 550.75,129.50 546.00,132.00" fill="#00ff00"/>
<polygon points="559.75,127.00 564.50,129.50 559.75,132.00" fill="#00ff00"/>
<polygon points="573.75,127.00 578.50,129.50 573.75,132.00" fill="#00ff00"/>
<polygon points="593.75,127.00 598.50,129.50 593.75,132.00" fill="#00ff00"/>
<polygon points="619.50,135.00 624.25,137.50 619.50,140.00" fill="#00ff00"/>
<polygon points="633.75,147.00 638.50,149.50 633.75,152.00" fill="#00ff00"/>
<polygon points="645.00,155.00 649.75,157.50 645.00,160.00" fill="#00ff00"/>
<polygon points="654.50,163.75 659.25,166.25 654.50,168.75" fill="#00ff00"/>
<polygon points="665.00,173.25 669.75,175.75 665.00,178.25" fill="#00ff00"/>
<polygon points="679.25,185.00 684.00,187.50 679.25,190.00" fill="#00ff00"/>
<polygon points="701.75,205.40 706.50,207.90 701.75,210.40" fill="#00ff00"/>
<polygon points="710.50,231.25 715.25,233.75 710.50,236.25" fill="#00ff00"/>
<polygon points="666.25,237.00 671.00,239.50 666.25,242.00" fill="#00ff00"/>
<polygon points="594.50,225.00 599.25,227.50 594.50,230.00" fill="#00ff00"/>
<polygon points="532.25,189.25 537.00,191.75 532.25,194.25" fill="#00ff00"/>
<polygon points="489.00,163.00 493.75,165.50 489.00,168.00" fill="#00ff00"/>
<polygon points="452.75,142.00 476.50,129.50 515.25,129.50 534.75,129.50 548.50,129.50 562.25,129.50 576.25,129.50 596.25,129.50 636.25,129.50 680.00,143.75 682.50,161.25 683.25,171.25 683.75,178.75 684.50,187.50 686.25,198.75 687.50,217.00 668.75,239.50 597.00,227.50 534.75,191.75 491.50,165.50" fill="none" stroke="#0000ff" stroke-width="1.5" stroke-linejoin="round"/>
<rect x="451.25" y="139.50" width="3.00" height="5.00" rx="0.5" fill="#0000ff"/>
<rect x="475.00" y="127.00" width="3.00" height="5.00" rx="0.5" fill="#0000ff"/>
<rect x="513.75" y="127.00" width="3.00" height="5.00" rx="0.5" fill="#0000ff"/>
<rect x="533.25" y="127.00" width="3.00" height="5.00" rx="0.5" fill="#0000ff"/>
<rect x="547.00" y="127.00" width="3.00" height="5.00" rx="0.5" fill="#0000ff"/>
<rect x="560.75" y="127.00" width="3.00" height="5.00" rx="0.5" fill="#0000ff"/>
<rect x="574.75" y="127.00" width="3.00" height="5.00" rx="0.5" fill="#0000ff"/>
<rect x="594.75" y="127.00" width="3.00" height="5.00" rx="0.5" fill="#0000ff"/>
<rect x="634.75" y="127.00" width="3.00" height="5.00" rx="0.5" fill="#0000ff"/>
<rect x="678.50" y="141.25" width="3.00" height="5.00" rx="0.5" fill="#0000ff"/>
<rect x="681.00" y="158.75" width="3.00" height="5.00" rx="0.5" fill="#0000ff"/>
<rect x="681.75" y="168.75" width="3.00" height="5.00" rx="0.5" fill="#0000ff"/>
<rect x="682.25" y="176.25" width="3.00" height="5.00" rx="0.5" fill="#0000ff"/>
<rect x="683.00" y="185.00" width="3.00" height="5.00" rx="0.5" fill="#0000ff"/>
<rect x="684.75" y="196.25" width="3.00" height="5.00" rx="0.5" fill="#0000ff"/>
<rect x="686.00" y="214.50" width="3.00" height="5.00" rx="0.5" fill="#0000ff"/>
<rect x="667.25" y="237.00" width="3.00" height="5.00" rx="0.5" fill="#0000ff"/>
<rect x="595.50" y="225.00" width="3.00" height="5.00" rx="0.5" fill="#0000ff"/>
<rect x="533.25" y="189.25" width="3.00" height="5.00" rx="0.5" fill="#0000ff"/>
<rect x="490.00" y="163.00" width="3.00" height="5.00" rx="0.5" fill="#0000ff"/>
<polygon points="452.75,142.00 476.50,129.50 515.25,129.50 534.75,129.50 548.50,129.50 562.25,129.50 576.25,129.50 596.25,129.50 636.25,129.50 710.75,141.25 713.20,162.50 713.10,233.75 668.75,239.50 597.00,227.50 534.75,191.75 491.50,165.50" fill="none" stroke="#804040" stroke-width="1.7" stroke-linejoin="round"/>
<rect x="450.80" y="140.05" width="3.90" height="3.90" fill="#804040"/>
<rect x="474.55" y="127.55" width="3.90" height="3.90" fill="#804040"/>
<rect x="513.30" y="127.55" width="3.90" height="3.90" fill="#804040"/>
<rect x="532.80" y="127.55" width="3.90" height="3.90" fill="#804040"/>
<rect x="546.55" y="127.55" width="3.90" height="3.90" fill="#804040"/>
<rect x="560.30" y="127.55" width="3.90" height="3.90" fill="#804040"/>
<rect x="574.30" y="127.55" width="3.90" height="3.90" fill="#804040"/>
<rect x="594.30" y="127.55" width="3.90" height="3.90" fill="#804040"/>
<rect x="634.30" y="127.55" width="3.90" height="3.90" fill="#804040"/>
<rect x="708.80" y="139.30" width="3.90" height="3.90" fill="#804040"/>
<rect x="711.25" y="160.55" width="3.90" height="3.90" fill="#804040"/>
<rect x="711.15" y="231.80" width="3.90" height="3.90" fill="#804040"/>
<rect x="666.80" y="237.55" width="3.90" height="3.90" fill="#804040"/>
<rect x="595.05" y="225.55" width="3.90" height="3.90" fill="#804040"/>
<rect x="532.80" y="189.80" width="3.90" height="3.90" fill="#804040"/>
<rect x="489.55" y="163.55" width="3.90" height="3.90" fill="#804040"/>
<rect x="711.65" y="160.55" width="3.90" height="3.90" fill="#804040"/>
<rect x="711.65" y="174.55" width="3.90" height="3.90" fill="#804040"/>
<rect x="711.65" y="185.55" width="3.90" height="3.90" fill="#804040"/>
<rect x="711.65" y="196.80" width="3.90" height="3.90" fill="#804040"/>
<rect x="711.65" y="210.55" width="3.90" height="3.90" fill="#804040"/>
<g stroke="#2a2a2a" stroke-width="1" fill="#2a2a2a"><line x1="597.25" y1="154.25" x2="606.75" y2="154.25"/><polygon points="599.45,151.75 596.25,154.25 599.45,156.75" stroke-width="0.5"/></g>
<text x="609.45" y="157.35" class="op">OP</text>
<line x1="436.50" y1="250.80" x2="436.50" y2="252.30" stroke="#999" stroke-width="0.7"/>
<text x="435.90" y="261.10" class="tk" text-anchor="middle">50</text>
<line x1="453.70" y1="250.80" x2="453.70" y2="252.30" stroke="#999" stroke-width="0.7"/>
<text x="453.10" y="261.10" class="tk" text-anchor="middle">60</text>
<line x1="470.90" y1="250.80" x2="470.90" y2="252.30" stroke="#999" stroke-width="0.7"/>
<text x="470.30" y="261.10" class="tk" text-anchor="middle">70</text>
<line x1="488.10" y1="250.80" x2="488.10" y2="252.30" stroke="#999" stroke-width="0.7"/>
<text x="487.50" y="261.10" class="tk" text-anchor="middle">80</text>
<line x1="505.30" y1="250.80" x2="505.30" y2="252.30" stroke="#999" stroke-width="0.7"/>
<text x="504.70" y="261.10" class="tk" text-anchor="middle">90</text>
<line x1="522.50" y1="250.80" x2="522.50" y2="252.30" stroke="#999" stroke-width="0.7"/>
<text x="521.90" y="261.10" class="tk" text-anchor="middle">100</text>
<line x1="539.70" y1="250.80" x2="539.70" y2="252.30" stroke="#999" stroke-width="0.7"/>
<text x="539.10" y="261.10" class="tk" text-anchor="middle">110</text>
<line x1="556.90" y1="250.80" x2="556.90" y2="252.30" stroke="#999" stroke-width="0.7"/>
<text x="556.30" y="261.10" class="tk" text-anchor="middle">120</text>
<line x1="574.10" y1="250.80" x2="574.10" y2="252.30" stroke="#999" stroke-width="0.7"/>
<text x="573.50" y="261.10" class="tk" text-anchor="middle">130</text>
<line x1="591.30" y1="250.80" x2="591.30" y2="252.30" stroke="#999" stroke-width="0.7"/>
<text x="590.70" y="261.10" class="tk" text-anchor="middle">140</text>
<line x1="608.50" y1="250.80" x2="608.50" y2="252.30" stroke="#999" stroke-width="0.7"/>
<text x="607.90" y="261.10" class="tk" text-anchor="middle">150</text>
<line x1="625.70" y1="250.80" x2="625.70" y2="252.30" stroke="#999" stroke-width="0.7"/>
<text x="625.10" y="261.10" class="tk" text-anchor="middle">160</text>
<line x1="642.90" y1="250.80" x2="642.90" y2="252.30" stroke="#999" stroke-width="0.7"/>
<text x="642.30" y="261.10" class="tk" text-anchor="middle">170</text>
<line x1="660.10" y1="250.80" x2="660.10" y2="252.30" stroke="#999" stroke-width="0.7"/>
<text x="659.50" y="261.10" class="tk" text-anchor="middle">180</text>
<line x1="677.30" y1="250.80" x2="677.30" y2="252.30" stroke="#999" stroke-width="0.7"/>
<text x="676.70" y="261.10" class="tk" text-anchor="middle">190</text>
<line x1="694.50" y1="250.80" x2="694.50" y2="252.30" stroke="#999" stroke-width="0.7"/>
<text x="693.90" y="261.10" class="tk" text-anchor="middle">200</text>
<line x1="711.70" y1="250.80" x2="711.70" y2="252.30" stroke="#999" stroke-width="0.7"/>
<text x="711.10" y="261.10" class="tk" text-anchor="middle">210</text>
<line x1="728.90" y1="250.80" x2="728.90" y2="252.30" stroke="#999" stroke-width="0.7"/>
<text x="728.30" y="261.10" class="tk" text-anchor="middle">220</text>
<line x1="425.70" y1="249.65" x2="427.20" y2="249.65" stroke="#999" stroke-width="0.7"/>
<text x="422.30" y="252.65" class="tk" text-anchor="end">-10</text>
<line x1="425.70" y1="239.58" x2="427.20" y2="239.58" stroke="#999" stroke-width="0.7"/>
<text x="422.30" y="242.58" class="tk" text-anchor="end">0</text>
<line x1="425.70" y1="229.50" x2="427.20" y2="229.50" stroke="#999" stroke-width="0.7"/>
<text x="422.30" y="232.50" class="tk" text-anchor="end">10</text>
<line x1="425.70" y1="219.43" x2="427.20" y2="219.43" stroke="#999" stroke-width="0.7"/>
<text x="422.30" y="222.43" class="tk" text-anchor="end">20</text>
<line x1="425.70" y1="209.35" x2="427.20" y2="209.35" stroke="#999" stroke-width="0.7"/>
<text x="422.30" y="212.35" class="tk" text-anchor="end">30</text>
<line x1="425.70" y1="199.28" x2="427.20" y2="199.28" stroke="#999" stroke-width="0.7"/>
<text x="422.30" y="202.28" class="tk" text-anchor="end">40</text>
<line x1="425.70" y1="189.20" x2="427.20" y2="189.20" stroke="#999" stroke-width="0.7"/>
<text x="422.30" y="192.20" class="tk" text-anchor="end">50</text>
<line x1="425.70" y1="179.12" x2="427.20" y2="179.12" stroke="#999" stroke-width="0.7"/>
<text x="422.30" y="182.12" class="tk" text-anchor="end">60</text>
<line x1="425.70" y1="169.05" x2="427.20" y2="169.05" stroke="#999" stroke-width="0.7"/>
<text x="422.30" y="172.05" class="tk" text-anchor="end">70</text>
<line x1="425.70" y1="158.98" x2="427.20" y2="158.98" stroke="#999" stroke-width="0.7"/>
<text x="422.30" y="161.98" class="tk" text-anchor="end">80</text>
<line x1="425.70" y1="148.90" x2="427.20" y2="148.90" stroke="#999" stroke-width="0.7"/>
<text x="422.30" y="151.90" class="tk" text-anchor="end">90</text>
<line x1="425.70" y1="138.83" x2="427.20" y2="138.83" stroke="#999" stroke-width="0.7"/>
<text x="422.30" y="141.83" class="tk" text-anchor="end">100</text>
<line x1="425.70" y1="128.75" x2="427.20" y2="128.75" stroke="#999" stroke-width="0.7"/>
<text x="422.30" y="131.75" class="tk" text-anchor="end">110</text>
<text x="565.20" y="274.40" class="al" textLength="35.6" lengthAdjust="spacingAndGlyphs">G1 (MW)</text>
<text transform="translate(402.95,202.60) rotate(-90)" class="al" textLength="35.6" lengthAdjust="spacingAndGlyphs">G3 (MW)</text>
<line x1="386.95" y1="283.10" x2="744.30" y2="283.10" stroke="#606060" stroke-width="1.1"/>
<line x1="389.25" y1="291.50" x2="401.25" y2="291.50" stroke="#804040" stroke-width="1.5"/>
<rect x="392.65" y="288.90" width="5.20" height="5.20" fill="#804040"/>
<text x="403.15" y="295.20" class="lg" textLength="59.3" lengthAdjust="spacingAndGlyphs">Limite de Mvar</text>
<line x1="466.65" y1="291.50" x2="478.65" y2="291.50" stroke="#0000ff" stroke-width="1.5"/>
<ellipse cx="472.35" cy="291.50" rx="2.21" ry="2.86" fill="#0000ff"/>
<text x="480.35" y="295.20" class="lg" textLength="61.0" lengthAdjust="spacingAndGlyphs">Limite Térmico</text>
<line x1="546.55" y1="291.50" x2="558.55" y2="291.50" stroke="#00ff00" stroke-width="1.5"/>
<polygon points="552.55,288.60 555.15,294.10 549.95,294.10" fill="#00ff00"/>
<text x="559.35" y="295.20" class="lg" textLength="71.9" lengthAdjust="spacingAndGlyphs">Limite de Tensão</text>
<line x1="635.85" y1="291.50" x2="647.85" y2="291.50" stroke="#ffff00" stroke-width="1.5"/>
<polygon points="641.85,288.59 644.76,291.50 641.85,294.41 638.94,291.50" fill="#ffff00"/>
<text x="649.35" y="295.20" class="lg" textLength="85.9" lengthAdjust="spacingAndGlyphs">Limite de Segurança</text>
<line x1="389.25" y1="307.00" x2="401.25" y2="307.00" stroke="#ff8000" stroke-width="1.5"/>
<rect x="392.35" y="305.55" width="5.80" height="2.90" fill="#ff8000"/>
<text x="403.15" y="310.60" class="lg" textLength="55.5" lengthAdjust="spacingAndGlyphs">Limite de MW</text>
</g>
<g id="c3">
<rect x="21.50" y="319.30" width="361.00" height="218.30" fill="#000"/>
<rect x="23.00" y="320.80" width="358.00" height="215.30" fill="#fff"/>
<text x="176.60" y="333.70" class="ttl" textLength="51.6" lengthAdjust="spacingAndGlyphs">G2 X G3</text>
<rect x="63.50" y="340.50" width="313.50" height="132.50" fill="#aa0000"/>
<g stroke="#bfa6a6" stroke-width="0.7"><line x1="71.50" y1="340.50" x2="71.50" y2="473.00"/><line x1="88.56" y1="340.50" x2="88.56" y2="473.00"/><line x1="105.62" y1="340.50" x2="105.62" y2="473.00"/><line x1="122.68" y1="340.50" x2="122.68" y2="473.00"/><line x1="139.74" y1="340.50" x2="139.74" y2="473.00"/><line x1="156.80" y1="340.50" x2="156.80" y2="473.00"/><line x1="173.86" y1="340.50" x2="173.86" y2="473.00"/><line x1="190.92" y1="340.50" x2="190.92" y2="473.00"/><line x1="207.98" y1="340.50" x2="207.98" y2="473.00"/><line x1="225.04" y1="340.50" x2="225.04" y2="473.00"/><line x1="242.10" y1="340.50" x2="242.10" y2="473.00"/><line x1="259.16" y1="340.50" x2="259.16" y2="473.00"/><line x1="276.22" y1="340.50" x2="276.22" y2="473.00"/><line x1="293.28" y1="340.50" x2="293.28" y2="473.00"/><line x1="310.34" y1="340.50" x2="310.34" y2="473.00"/><line x1="327.40" y1="340.50" x2="327.40" y2="473.00"/><line x1="344.46" y1="340.50" x2="344.46" y2="473.00"/><line x1="361.52" y1="340.50" x2="361.52" y2="473.00"/><line x1="63.50" y1="472.00" x2="377.00" y2="472.00"/><line x1="63.50" y1="461.88" x2="377.00" y2="461.88"/><line x1="63.50" y1="451.75" x2="377.00" y2="451.75"/><line x1="63.50" y1="441.62" x2="377.00" y2="441.62"/><line x1="63.50" y1="431.50" x2="377.00" y2="431.50"/><line x1="63.50" y1="421.38" x2="377.00" y2="421.38"/><line x1="63.50" y1="411.25" x2="377.00" y2="411.25"/><line x1="63.50" y1="401.12" x2="377.00" y2="401.12"/><line x1="63.50" y1="391.00" x2="377.00" y2="391.00"/><line x1="63.50" y1="380.88" x2="377.00" y2="380.88"/><line x1="63.50" y1="370.75" x2="377.00" y2="370.75"/><line x1="63.50" y1="360.62" x2="377.00" y2="360.62"/><line x1="63.50" y1="350.50" x2="377.00" y2="350.50"/></g>
<clipPath id="c3_h"><polygon points="144.75,351.90 184.75,351.90 204.75,351.90 218.75,351.90 231.50,351.90 245.75,351.90 265.75,351.90 305.25,351.90 350.25,363.50 350.25,387.25 350.25,413.50 350.25,449.50 299.00,461.25 247.00,456.60 88.50,362.75"/></clipPath>
<clipPath id="c3_a"><polygon points="144.75,351.90 184.75,351.90 204.75,351.90 218.75,351.90 231.50,351.90 245.75,351.90 265.75,351.90 305.25,351.90 350.25,363.50 350.25,387.25 350.25,413.50 350.25,449.50 299.00,461.25 242.25,438.90 213.25,421.00 195.60,409.75 181.50,401.50 167.75,393.00 152.25,382.75 126.75,366.50"/></clipPath>
<polygon points="144.75,351.90 184.75,351.90 204.75,351.90 218.75,351.90 231.50,351.90 245.75,351.90 265.75,351.90 305.25,351.90 350.25,363.50 350.25,387.25 350.25,413.50 350.25,449.50 299.00,461.25 247.00,456.60 88.50,362.75" fill="#ffff00"/>
<g clip-path="url(#c3_h)">
<polygon points="144.75,351.90 184.75,351.90 204.75,351.90 218.75,351.90 231.50,351.90 245.75,351.90 265.75,351.90 305.25,351.90 350.25,363.50 350.25,387.25 350.25,413.50 350.25,449.50 299.00,461.25 242.25,438.90 213.25,421.00 195.60,409.75 181.50,401.50 167.75,393.00 152.25,382.75 126.75,366.50" fill="#cce600"/>
<polygon points="184.75,351.90 204.75,351.90 218.75,351.90 231.50,351.90 245.75,351.90 265.75,351.90 305.25,351.90 350.25,363.50 350.25,387.25 350.25,413.50 350.25,449.50 299.00,461.25 245.75,457.00 209.75,430.00 200.75,416.00 195.50,409.75 189.25,396.75 184.75,388.50 181.00,379.75 175.25,369.75 171.00,359.75" fill="#cce600"/>
<polygon points="184.75,351.90 204.75,351.90 218.75,351.90 231.50,351.90 245.75,351.90 265.75,351.90 305.25,351.90 350.25,363.50 350.25,387.25 350.25,413.50 350.25,449.50 299.00,461.25 245.75,457.00 209.75,430.00 200.75,416.00 195.50,409.75 189.25,396.75 184.75,388.50 181.00,379.75 175.25,369.75 171.00,359.75" fill="#99cc00" clip-path="url(#c3_a)"/>
</g>
<polygon points="144.75,351.90 184.75,351.90 204.75,351.90 218.75,351.90 231.50,351.90 245.75,351.90 265.75,351.90 305.25,351.90 350.25,363.50 350.25,387.25 350.25,413.50 350.25,449.50 299.00,461.25 247.00,456.60 88.50,362.75" fill="none" stroke="#ffff00" stroke-width="1.2" stroke-linejoin="round"/>
<polygon points="144.75,351.90 184.75,351.90 204.75,351.90 218.75,351.90 231.50,351.90 245.75,351.90 265.75,351.90 305.25,351.90 350.25,363.50 350.25,387.25 350.25,413.50 350.25,449.50 299.00,461.25 247.00,456.60 88.50,362.75" fill="none" stroke="#ff8000" stroke-width="0.8" stroke-linejoin="round"/>
<polygon points="246.50,454.75 248.40,456.65 246.50,458.55 244.60,456.65" fill="#ffff00"/>
<rect x="244.50" y="455.65" width="4.00" height="2.00" fill="#ff8000"/>
<polygon points="209.00,432.25 210.90,434.15 209.00,436.05 207.10,434.15" fill="#ffff00"/>
<rect x="207.00" y="433.15" width="4.00" height="2.00" fill="#ff8000"/>
<polygon points="186.25,419.00 188.15,420.90 186.25,422.80 184.35,420.90" fill="#ffff00"/>
<rect x="184.25" y="419.90" width="4.00" height="2.00" fill="#ff8000"/>
<polygon points="167.25,408.25 169.15,410.15 167.25,412.05 165.35,410.15" fill="#ffff00"/>
<rect x="165.25" y="409.15" width="4.00" height="2.00" fill="#ff8000"/>
<polygon points="148.00,396.50 149.90,398.40 148.00,400.30 146.10,398.40" fill="#ffff00"/>
<rect x="146.00" y="397.40" width="4.00" height="2.00" fill="#ff8000"/>
<polygon points="126.25,383.25 128.15,385.15 126.25,387.05 124.35,385.15" fill="#ffff00"/>
<rect x="124.25" y="384.15" width="4.00" height="2.00" fill="#ff8000"/>
<polygon points="88.50,360.06 91.19,362.75 88.50,365.44 85.81,362.75" fill="#ffff00"/>
<polygon points="184.75,351.90 204.75,351.90 218.75,351.90 231.50,351.90 245.75,351.90 265.75,351.90 305.25,351.90 350.25,363.50 350.25,387.25 350.25,413.50 350.25,449.50 299.00,461.25 245.75,457.00 209.75,430.00 200.75,416.00 195.50,409.75 189.25,396.75 184.75,388.50 181.00,379.75 175.25,369.75 171.00,359.75" fill="none" stroke="#00ff00" stroke-width="1.5" stroke-linejoin="round"/>
<polygon points="182.25,349.40 187.00,351.90 182.25,354.40" fill="#00ff00"/>
<polygon points="202.25,349.40 207.00,351.90 202.25,354.40" fill="#00ff00"/>
<polygon points="216.25,349.40 221.00,351.90 216.25,354.40" fill="#00ff00"/>
<polygon points="229.00,349.40 233.75,351.90 229.00,354.40" fill="#00ff00"/>
<polygon points="243.25,349.40 248.00,351.90 243.25,354.40" fill="#00ff00"/>
<polygon points="263.25,349.40 268.00,351.90 263.25,354.40" fill="#00ff00"/>
<polygon points="302.75,349.40 307.50,351.90 302.75,354.40" fill="#00ff00"/>
<polygon points="347.75,361.00 352.50,363.50 347.75,366.00" fill="#00ff00"/>
<polygon points="347.75,384.75 352.50,387.25 347.75,389.75" fill="#00ff00"/>
<polygon points="347.75,411.00 352.50,413.50 347.75,416.00" fill="#00ff00"/>
<polygon points="347.75,447.00 352.50,449.50 347.75,452.00" fill="#00ff00"/>
<polygon points="296.50,458.75 301.25,461.25 296.50,463.75" fill="#00ff00"/>
<polygon points="243.25,454.50 248.00,457.00 243.25,459.50" fill="#00ff00"/>
<polygon points="207.25,427.50 212.00,430.00 207.25,432.50" fill="#00ff00"/>
<polygon points="198.25,413.50 203.00,416.00 198.25,418.50" fill="#00ff00"/>
<polygon points="193.00,407.25 197.75,409.75 193.00,412.25" fill="#00ff00"/>
<polygon points="186.75,394.25 191.50,396.75 186.75,399.25" fill="#00ff00"/>
<polygon points="182.25,386.00 187.00,388.50 182.25,391.00" fill="#00ff00"/>
<polygon points="178.50,377.25 183.25,379.75 178.50,382.25" fill="#00ff00"/>
<polygon points="172.75,367.25 177.50,369.75 172.75,372.25" fill="#00ff00"/>
<polygon points="168.50,357.25 173.25,359.75 168.50,362.25" fill="#00ff00"/>
<polygon points="144.75,351.90 184.75,351.90 204.75,351.90 218.75,351.90 231.50,351.90 245.75,351.90 265.75,351.90 305.25,351.90 350.25,363.50 350.25,387.25 350.25,413.50 350.25,449.50 299.00,461.25 242.25,438.90 213.25,421.00 195.60,409.75 181.50,401.50 167.75,393.00 152.25,382.75 126.75,366.50" fill="none" stroke="#0000ff" stroke-width="1.5" stroke-linejoin="round"/>
<rect x="143.25" y="349.40" width="3.00" height="5.00" rx="0.5" fill="#0000ff"/>
<rect x="183.25" y="349.40" width="3.00" height="5.00" rx="0.5" fill="#0000ff"/>
<rect x="203.25" y="349.40" width="3.00" height="5.00" rx="0.5" fill="#0000ff"/>
<rect x="217.25" y="349.40" width="3.00" height="5.00" rx="0.5" fill="#0000ff"/>
<rect x="230.00" y="349.40" width="3.00" height="5.00" rx="0.5" fill="#0000ff"/>
<rect x="244.25" y="349.40" width="3.00" height="5.00" rx="0.5" fill="#0000ff"/>
<rect x="264.25" y="349.40" width="3.00" height="5.00" rx="0.5" fill="#0000ff"/>
<rect x="303.75" y="349.40" width="3.00" height="5.00" rx="0.5" fill="#0000ff"/>
<rect x="348.75" y="361.00" width="3.00" height="5.00" rx="0.5" fill="#0000ff"/>
<rect x="348.75" y="384.75" width="3.00" height="5.00" rx="0.5" fill="#0000ff"/>
<rect x="348.75" y="411.00" width="3.00" height="5.00" rx="0.5" fill="#0000ff"/>
<rect x="348.75" y="447.00" width="3.00" height="5.00" rx="0.5" fill="#0000ff"/>
<rect x="297.50" y="458.75" width="3.00" height="5.00" rx="0.5" fill="#0000ff"/>
<rect x="240.75" y="436.40" width="3.00" height="5.00" rx="0.5" fill="#0000ff"/>
<rect x="211.75" y="418.50" width="3.00" height="5.00" rx="0.5" fill="#0000ff"/>
<rect x="194.10" y="407.25" width="3.00" height="5.00" rx="0.5" fill="#0000ff"/>
<rect x="180.00" y="399.00" width="3.00" height="5.00" rx="0.5" fill="#0000ff"/>
<rect x="166.25" y="390.50" width="3.00" height="5.00" rx="0.5" fill="#0000ff"/>
<rect x="150.75" y="380.25" width="3.00" height="5.00" rx="0.5" fill="#0000ff"/>
<rect x="125.25" y="364.00" width="3.00" height="5.00" rx="0.5" fill="#0000ff"/>
<polygon points="144.75,351.90 184.75,351.90 204.75,351.90 218.75,351.90 231.50,351.90 245.75,351.90 265.75,351.90 305.25,351.90 350.25,363.50 350.25,387.25 350.25,413.50 350.25,449.50 299.00,461.25 247.00,456.25 209.50,433.75 186.75,420.50 167.75,409.75 148.50,398.00 126.75,384.75 94.25,362.75" fill="none" stroke="#804040" stroke-width="1.7" stroke-linejoin="round"/>
<rect x="142.80" y="349.95" width="3.90" height="3.90" fill="#804040"/>
<rect x="182.80" y="349.95" width="3.90" height="3.90" fill="#804040"/>
<rect x="202.80" y="349.95" width="3.90" height="3.90" fill="#804040"/>
<rect x="216.80" y="349.95" width="3.90" height="3.90" fill="#804040"/>
<rect x="229.55" y="349.95" width="3.90" height="3.90" fill="#804040"/>
<rect x="243.80" y="349.95" width="3.90" height="3.90" fill="#804040"/>
<rect x="263.80" y="349.95" width="3.90" height="3.90" fill="#804040"/>
<rect x="303.30" y="349.95" width="3.90" height="3.90" fill="#804040"/>
<rect x="348.30" y="361.55" width="3.90" height="3.90" fill="#804040"/>
<rect x="348.30" y="385.30" width="3.90" height="3.90" fill="#804040"/>
<rect x="348.30" y="411.55" width="3.90" height="3.90" fill="#804040"/>
<rect x="348.30" y="447.55" width="3.90" height="3.90" fill="#804040"/>
<rect x="297.05" y="459.30" width="3.90" height="3.90" fill="#804040"/>
<rect x="245.05" y="454.30" width="3.90" height="3.90" fill="#804040"/>
<rect x="207.55" y="431.80" width="3.90" height="3.90" fill="#804040"/>
<rect x="184.80" y="418.55" width="3.90" height="3.90" fill="#804040"/>
<rect x="165.80" y="407.80" width="3.90" height="3.90" fill="#804040"/>
<rect x="146.55" y="396.05" width="3.90" height="3.90" fill="#804040"/>
<rect x="124.80" y="382.80" width="3.90" height="3.90" fill="#804040"/>
<rect x="92.30" y="360.80" width="3.90" height="3.90" fill="#804040"/>
<g stroke="#2a2a2a" stroke-width="1" fill="#2a2a2a"><line x1="226.75" y1="376.00" x2="236.25" y2="376.00"/><polygon points="228.95,373.50 225.75,376.00 228.95,378.50" stroke-width="0.5"/></g>
<text x="238.95" y="379.10" class="op">OP</text>
<line x1="71.50" y1="473.00" x2="71.50" y2="474.50" stroke="#999" stroke-width="0.7"/>
<text x="70.90" y="483.30" class="tk" text-anchor="middle">0</text>
<line x1="88.56" y1="473.00" x2="88.56" y2="474.50" stroke="#999" stroke-width="0.7"/>
<text x="87.96" y="483.30" class="tk" text-anchor="middle">10</text>
<line x1="105.62" y1="473.00" x2="105.62" y2="474.50" stroke="#999" stroke-width="0.7"/>
<text x="105.02" y="483.30" class="tk" text-anchor="middle">20</text>
<line x1="122.68" y1="473.00" x2="122.68" y2="474.50" stroke="#999" stroke-width="0.7"/>
<text x="122.08" y="483.30" class="tk" text-anchor="middle">30</text>
<line x1="139.74" y1="473.00" x2="139.74" y2="474.50" stroke="#999" stroke-width="0.7"/>
<text x="139.14" y="483.30" class="tk" text-anchor="middle">40</text>
<line x1="156.80" y1="473.00" x2="156.80" y2="474.50" stroke="#999" stroke-width="0.7"/>
<text x="156.20" y="483.30" class="tk" text-anchor="middle">50</text>
<line x1="173.86" y1="473.00" x2="173.86" y2="474.50" stroke="#999" stroke-width="0.7"/>
<text x="173.26" y="483.30" class="tk" text-anchor="middle">60</text>
<line x1="190.92" y1="473.00" x2="190.92" y2="474.50" stroke="#999" stroke-width="0.7"/>
<text x="190.32" y="483.30" class="tk" text-anchor="middle">70</text>
<line x1="207.98" y1="473.00" x2="207.98" y2="474.50" stroke="#999" stroke-width="0.7"/>
<text x="207.38" y="483.30" class="tk" text-anchor="middle">80</text>
<line x1="225.04" y1="473.00" x2="225.04" y2="474.50" stroke="#999" stroke-width="0.7"/>
<text x="224.44" y="483.30" class="tk" text-anchor="middle">90</text>
<line x1="242.10" y1="473.00" x2="242.10" y2="474.50" stroke="#999" stroke-width="0.7"/>
<text x="241.50" y="483.30" class="tk" text-anchor="middle">100</text>
<line x1="259.16" y1="473.00" x2="259.16" y2="474.50" stroke="#999" stroke-width="0.7"/>
<text x="258.56" y="483.30" class="tk" text-anchor="middle">110</text>
<line x1="276.22" y1="473.00" x2="276.22" y2="474.50" stroke="#999" stroke-width="0.7"/>
<text x="275.62" y="483.30" class="tk" text-anchor="middle">120</text>
<line x1="293.28" y1="473.00" x2="293.28" y2="474.50" stroke="#999" stroke-width="0.7"/>
<text x="292.68" y="483.30" class="tk" text-anchor="middle">130</text>
<line x1="310.34" y1="473.00" x2="310.34" y2="474.50" stroke="#999" stroke-width="0.7"/>
<text x="309.74" y="483.30" class="tk" text-anchor="middle">140</text>
<line x1="327.40" y1="473.00" x2="327.40" y2="474.50" stroke="#999" stroke-width="0.7"/>
<text x="326.80" y="483.30" class="tk" text-anchor="middle">150</text>
<line x1="344.46" y1="473.00" x2="344.46" y2="474.50" stroke="#999" stroke-width="0.7"/>
<text x="343.86" y="483.30" class="tk" text-anchor="middle">160</text>
<line x1="361.52" y1="473.00" x2="361.52" y2="474.50" stroke="#999" stroke-width="0.7"/>
<text x="360.92" y="483.30" class="tk" text-anchor="middle">170</text>
<line x1="62.00" y1="472.00" x2="63.50" y2="472.00" stroke="#999" stroke-width="0.7"/>
<text x="58.60" y="474.90" class="tk" text-anchor="end">-10</text>
<line x1="62.00" y1="461.88" x2="63.50" y2="461.88" stroke="#999" stroke-width="0.7"/>
<text x="58.60" y="464.77" class="tk" text-anchor="end">0</text>
<line x1="62.00" y1="451.75" x2="63.50" y2="451.75" stroke="#999" stroke-width="0.7"/>
<text x="58.60" y="454.65" class="tk" text-anchor="end">10</text>
<line x1="62.00" y1="441.62" x2="63.50" y2="441.62" stroke="#999" stroke-width="0.7"/>
<text x="58.60" y="444.52" class="tk" text-anchor="end">20</text>
<line x1="62.00" y1="431.50" x2="63.50" y2="431.50" stroke="#999" stroke-width="0.7"/>
<text x="58.60" y="434.40" class="tk" text-anchor="end">30</text>
<line x1="62.00" y1="421.38" x2="63.50" y2="421.38" stroke="#999" stroke-width="0.7"/>
<text x="58.60" y="424.27" class="tk" text-anchor="end">40</text>
<line x1="62.00" y1="411.25" x2="63.50" y2="411.25" stroke="#999" stroke-width="0.7"/>
<text x="58.60" y="414.15" class="tk" text-anchor="end">50</text>
<line x1="62.00" y1="401.12" x2="63.50" y2="401.12" stroke="#999" stroke-width="0.7"/>
<text x="58.60" y="404.02" class="tk" text-anchor="end">60</text>
<line x1="62.00" y1="391.00" x2="63.50" y2="391.00" stroke="#999" stroke-width="0.7"/>
<text x="58.60" y="393.90" class="tk" text-anchor="end">70</text>
<line x1="62.00" y1="380.88" x2="63.50" y2="380.88" stroke="#999" stroke-width="0.7"/>
<text x="58.60" y="383.77" class="tk" text-anchor="end">80</text>
<line x1="62.00" y1="370.75" x2="63.50" y2="370.75" stroke="#999" stroke-width="0.7"/>
<text x="58.60" y="373.65" class="tk" text-anchor="end">90</text>
<line x1="62.00" y1="360.62" x2="63.50" y2="360.62" stroke="#999" stroke-width="0.7"/>
<text x="58.60" y="363.52" class="tk" text-anchor="end">100</text>
<line x1="62.00" y1="350.50" x2="63.50" y2="350.50" stroke="#999" stroke-width="0.7"/>
<text x="58.60" y="353.40" class="tk" text-anchor="end">110</text>
<text x="201.85" y="496.60" class="al" textLength="35.6" lengthAdjust="spacingAndGlyphs">G2 (MW)</text>
<text transform="translate(38.70,424.65) rotate(-90)" class="al" textLength="35.6" lengthAdjust="spacingAndGlyphs">G3 (MW)</text>
<line x1="22.70" y1="504.60" x2="381.30" y2="504.60" stroke="#606060" stroke-width="1.1"/>
<line x1="25.00" y1="513.00" x2="37.00" y2="513.00" stroke="#804040" stroke-width="1.5"/>
<rect x="28.40" y="510.40" width="5.20" height="5.20" fill="#804040"/>
<text x="38.90" y="516.70" class="lg" textLength="59.3" lengthAdjust="spacingAndGlyphs">Limite de Mvar</text>
<line x1="102.40" y1="513.00" x2="114.40" y2="513.00" stroke="#0000ff" stroke-width="1.5"/>
<ellipse cx="108.10" cy="513.00" rx="2.21" ry="2.86" fill="#0000ff"/>
<text x="116.10" y="516.70" class="lg" textLength="61.0" lengthAdjust="spacingAndGlyphs">Limite Térmico</text>
<line x1="182.30" y1="513.00" x2="194.30" y2="513.00" stroke="#00ff00" stroke-width="1.5"/>
<polygon points="188.30,510.10 190.90,515.60 185.70,515.60" fill="#00ff00"/>
<text x="195.10" y="516.70" class="lg" textLength="71.9" lengthAdjust="spacingAndGlyphs">Limite de Tensão</text>
<line x1="271.60" y1="513.00" x2="283.60" y2="513.00" stroke="#ffff00" stroke-width="1.5"/>
<polygon points="277.60,510.09 280.51,513.00 277.60,515.91 274.69,513.00" fill="#ffff00"/>
<text x="285.10" y="516.70" class="lg" textLength="85.9" lengthAdjust="spacingAndGlyphs">Limite de Segurança</text>
<line x1="25.00" y1="528.50" x2="37.00" y2="528.50" stroke="#ff8000" stroke-width="1.5"/>
<rect x="28.10" y="527.05" width="5.80" height="2.90" fill="#ff8000"/>
<text x="38.90" y="532.10" class="lg" textLength="55.5" lengthAdjust="spacingAndGlyphs">Limite de MW</text>
</g>
 </svg>
 <div id="info">
  <div class="row" style="top:3.0px"><b style="margin-left:4px">Caso:</b>Dados de Rede no Formato ANAREDE</div>
  <div class="row g" style="top:24.1px"><b style="margin-left:4px">Hora da Simulação:</b>13/12/2013&nbsp; 06:40:4</div>
  <div class="row" style="top:45.2px"><b style="margin-left:4px;letter-spacing:-0.1px">Sim ESTÁTICA - Direções:</b>20</div>
  <div class="row g" style="top:66.3px"><b style="margin-left:4px">Status:</b>Ponto de Operação Seguro e sem Violação</div>
  <div class="row" style="top:87.4px"><b style="margin-left:4px">Hora do Nomograma:</b>&nbsp;13/12/2013&nbsp; 6:42:44</div>
  <div class="row g" style="top:108.5px"><b style="margin-left:4px">Atualização do Nomograma:</b>13/12/2013 06:42:45</div>
 </div>
</div>
</body>
</html>
